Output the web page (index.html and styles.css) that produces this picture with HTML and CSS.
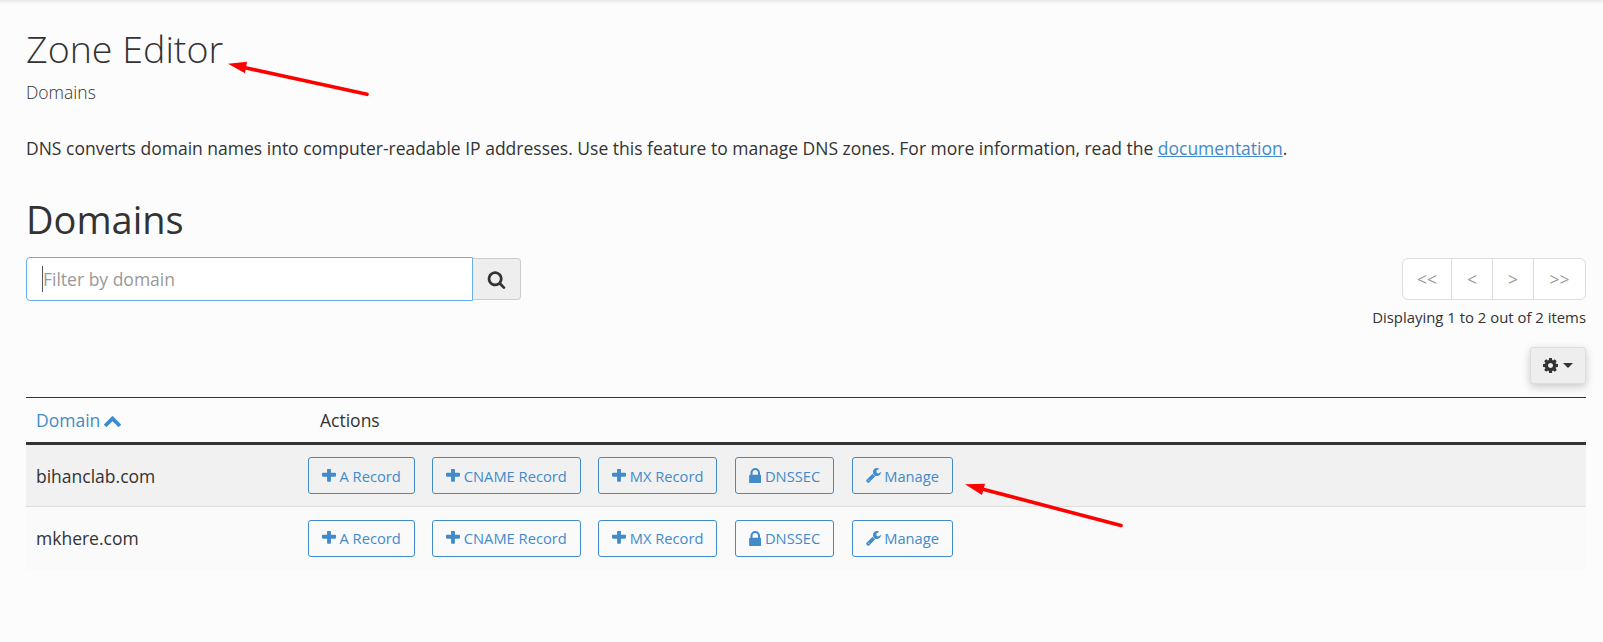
FILE: index.html
```html
<!DOCTYPE html>
<html lang="en">
<head>
<meta charset="utf-8">
<title>Zone Editor</title>
<link rel="stylesheet" href="styles.css">
</head>
<body>
<svg class="defs" width="0" height="0" aria-hidden="true">
  <symbol id="i-plus" viewBox="192 256 1408 1408"><path d="M1600 736v192q0 40-28 68t-68 28h-416v416q0 40-28 68t-68 28h-192q-40 0-68-28t-28-68v-416h-416q-40 0-68-28t-28-68v-192q0-40 28-68t68-28h416v-416q0-40 28-68t68-28h192q40 0 68 28t28 68v416h416q40 0 68 28t28 68z" transform="translate(0 0)"/></symbol>
  <symbol id="i-lock" viewBox="320 128 1152 1408"><path d="M640 768h512v-192q0-106-75-181t-181-75-181 75-75 181v192zm832 96v576q0 40-28 68t-68 28h-960q-40 0-68-28t-28-68v-576q0-40 28-68t68-28h32v-192q0-184 132-316t316-132 316 132 132 316v192h32q40 0 68 28t28 68z"/></symbol>
  <symbol id="i-wrench" viewBox="64 128 1664 1664"><path d="M448 1472q0-26-19-45t-45-19-45 19-19 45 19 45 45 19 45-19 19-45zm644-420l-682 682q-37 37-90 37-52 0-91-37l-106-108q-38-36-38-90 0-53 38-91l681-681q39 98 114.5 173.5t173.5 114.5zm634-435q0 39-23 106-47 134-164.5 217.5t-258.5 83.5q-185 0-316.5-131.5t-131.5-316.5 131.5-316.5 316.5-131.5q58 0 121.5 16.5t107.5 46.5q16 11 16 28t-16 28l-293 169v224l193 107q5-3 79-48.5t135.5-81 70.5-35.5q15 0 23.5 10t8.5 25z"/></symbol>
  <symbol id="i-cog" viewBox="128 128 1536 1536"><path d="M1152 896q0-106-75-181t-181-75-181 75-75 181 75 181 181 75 181-75 75-181zm512-109v222q0 12-8 23t-20 13l-185 28q-19 54-39 91 35 50 107 138 10 12 10 25t-9 23q-27 37-99 108t-94 71q-12 0-26-9l-138-108q-44 23-91 38-16 136-29 186-7 28-36 28h-222q-14 0-24.5-8.5t-11.5-21.5l-28-184q-49-16-90-37l-141 107q-10 9-25 9-14 0-25-11-126-114-165-168-7-10-7-23 0-12 8-23 15-21 51-66.5t54-70.5q-27-50-41-99l-183-27q-13-2-21-12.5t-8-23.5v-222q0-12 8-23t19-13l186-28q14-46 39-92-40-57-107-138-10-12-10-24 0-10 9-23 26-36 98.5-107.5t94.5-71.5q13 0 26 10l138 107q44-23 91-38 16-136 29-186 7-28 36-28h222q14 0 24.5 8.5t11.5 21.5l28 184q49 16 90 37l142-107q9-9 24-9 13 0 25 10 129 119 165 170 7 8 7 22 0 12-8 23-15 21-51 66.5t-54 70.5q26 50 41 98l183 28q13 2 21 12.5t8 23.5z"/></symbol>
  <symbol id="i-search" viewBox="0 0 1792 1792"><path d="M1216 832q0-185-131.5-316.5t-316.5-131.5-316.5 131.5-131.5 316.5 131.5 316.5 316.5 131.5 316.5-131.5 131.5-316.5zm512 832q0 52-38 90t-90 38q-54 0-90-38l-343-342q-179 124-399 124-143 0-273.5-55.5t-225-150-150-225-55.5-273.5 55.5-273.5 150-225 225-150 273.5-55.5 273.5 55.5 225 150 150 225 55.5 273.5q0 220-124 399l343 343q37 37 37 90z"/></symbol>
  <symbol id="i-chevron" viewBox="0 0 1792 1792"><path d="M1683 1331l-166 165q-19 19-45 19t-45-19l-531-531-531 531q-19 19-45 19t-45-19l-166-165q-19-19-19-45.5t19-45.5l742-741q19-19 45-19t45 19l742 741q19 19 19 45.5t-19 45.5z"/></symbol>
</svg>

<main class="page">
  <h1 class="title">Zone Editor</h1>
  <p class="subtitle">Domains</p>
  <p class="intro">DNS converts domain names into computer-readable IP addresses. Use this feature to manage DNS zones. For more information, read the <a href="#">documentation</a>.</p>
  <h2 class="section">Domains</h2>

  <div class="toolbar">
    <div class="search">
      <div class="search-input"><span class="caret-bar"></span><span class="placeholder">Filter by domain</span></div>
      <div class="search-btn"><svg class="ico-search"><use href="#i-search"/></svg></div>
    </div>
    <div class="paging">
      <div class="pager">
        <span class="pg pg-wide">&lt;&lt;</span><span class="pg">&lt;</span><span class="pg">&gt;</span><span class="pg pg-last">&gt;&gt;</span>
      </div>
      <div class="count">Displaying 1 to 2 out of 2 items</div>
    </div>
  </div>

  <div class="settings-row">
    <div class="settings"><svg class="ico-cog"><use href="#i-cog"/></svg><span class="drop"></span></div>
  </div>

  <table class="grid">
    <thead>
      <tr>
        <th class="col-domain"><a href="#">Domain <svg class="ico-chevron"><use href="#i-chevron"/></svg></a></th>
        <th class="col-actions">Actions</th>
      </tr>
    </thead>
    <tbody>
      <tr class="row-alt">
        <td class="name">bihanclab.com</td>
        <td>
          <div class="actions">
            <a class="btn" href="#"><svg class="ico"><use href="#i-plus"/></svg>A Record</a>
            <a class="btn" href="#"><svg class="ico"><use href="#i-plus"/></svg>CNAME Record</a>
            <a class="btn" href="#"><svg class="ico"><use href="#i-plus"/></svg>MX Record</a>
            <a class="btn" href="#"><svg class="ico-lock"><use href="#i-lock"/></svg>DNSSEC</a>
            <a class="btn" href="#"><svg class="ico-wrench"><use href="#i-wrench"/></svg>Manage</a>
          </div>
        </td>
      </tr>
      <tr class="row-plain">
        <td class="name">mkhere.com</td>
        <td>
          <div class="actions">
            <a class="btn" href="#"><svg class="ico"><use href="#i-plus"/></svg>A Record</a>
            <a class="btn" href="#"><svg class="ico"><use href="#i-plus"/></svg>CNAME Record</a>
            <a class="btn" href="#"><svg class="ico"><use href="#i-plus"/></svg>MX Record</a>
            <a class="btn" href="#"><svg class="ico-lock"><use href="#i-lock"/></svg>DNSSEC</a>
            <a class="btn" href="#"><svg class="ico-wrench"><use href="#i-wrench"/></svg>Manage</a>
          </div>
        </td>
      </tr>
    </tbody>
  </table>
</main>

<svg class="arrows" width="1603" height="642" aria-hidden="true">
  <path class="head" d="M228 63.7 L247 61.8 L245 73.3 Z"/>
  <path class="shaft" d="M244 67.5 L367 94.3"/>
  <path class="head" d="M965 484.3 L985 483.8 L982 495 Z"/>
  <path class="shaft" d="M980 488.5 L1121 525.5"/>
</svg>
</body>
</html>
```

FILE: styles.css
```css
* { box-sizing: border-box; }
html, body { margin: 0; padding: 0; }
body {
  width: 1603px;
  height: 642px;
  overflow: hidden;
  position: relative;
  background: #fcfcfc;
  color: #333;
  font-family: "Open Sans", "Liberation Sans", sans-serif;
  font-size: 17.5px;
  box-shadow: inset 0 4px 4px -3px rgba(0, 0, 0, .12);
}
a { color: #428bca; }
.defs { position: absolute; }

.page { padding: 0 17px 0 26px; }

.title {
  margin: 0;
  padding-top: 24px;
  font-size: 37.6px;
  line-height: 50px;
  font-weight: 300;
}
.subtitle {
  margin: 6px 0 0;
  font-size: 17.5px;
  line-height: 24px;
  font-weight: 300;
}
.intro {
  margin: 32px 0 0;
  font-size: 17.5px;
  line-height: 24px;
}
.section {
  margin: 34px 0 0;
  font-size: 38px;
  line-height: 50px;
  font-weight: 500;
}

.toolbar {
  display: flex;
  justify-content: space-between;
  align-items: flex-start;
  margin-top: 13px;
}
.search { display: flex; width: 495px; height: 44px; }
.search-input {
  flex: 1;
  display: flex;
  align-items: center;
  padding-left: 15px;
  background: #fff;
  border: 1px solid #66afe9;
  border-radius: 4px 0 0 4px;
}
.caret-bar { width: 1px; height: 26px; background: #555; }
.placeholder { font-size: 17.5px; color: #999; }
.search-btn {
  width: 48px;
  display: flex;
  align-items: center;
  justify-content: center;
  background: #eee;
  border: 1px solid #ccc;
  border-left: 0;
  border-radius: 0 4px 4px 0;
  margin: 1px 0;
}
.ico-search { width: 19px; height: 19px; fill: #333; }

.paging { display: flex; flex-direction: column; align-items: flex-end; }
.pager {
  display: flex;
  height: 42px;
  margin-top: 1px;
  background: #fff;
  border: 1px solid #ddd;
  border-radius: 6px;
  color: #999;
  font-size: 17.5px;
}
.pg {
  width: 41px;
  display: flex;
  align-items: center;
  justify-content: center;
  border-right: 1px solid #ddd;
}
.pg-wide { width: 49px; }
.pg-last { width: 51px; border-right: 0; }
.count { margin-top: 7px; font-size: 14.9px; line-height: 20px; }

.settings-row { display: flex; justify-content: flex-end; margin-top: 20px; }
.settings {
  width: 56px;
  height: 37px;
  display: flex;
  align-items: center;
  justify-content: center;
  gap: 5px;
  background: #eee;
  border: 1px solid #ddd;
  border-radius: 3px;
  box-shadow: 0 3px 8px rgba(0, 0, 0, .2);
}
.ico-cog { width: 15px; height: 15px; fill: #333; }
.drop {
  width: 0;
  height: 0;
  border-left: 5.5px solid transparent;
  border-right: 5.5px solid transparent;
  border-top: 5.5px solid #333;
}

.grid {
  width: 100%;
  margin-top: 13px;
  border-collapse: collapse;
  table-layout: fixed;
}
.grid th {
  height: 46px;
  padding: 0;
  font-size: 17.5px;
  font-weight: 400;
  text-align: left;
  border-top: 1px solid #333;
  border-bottom: 3px solid #333;
}
.grid th a { text-decoration: none; }
.col-domain { width: 282px; padding-left: 10px !important; }
.col-actions { padding-left: 12px !important; }
.ico-chevron { width: 19px; height: 19px; fill: #428bca; vertical-align: -3px; margin-left: -2px; }

.grid td { height: 63px; padding: 0; }
.grid tbody tr { border-bottom: 1px solid #ddd; }
.grid tbody tr:last-child { border-bottom: 0; }
.row-alt { background: #f1f1f1; }
.row-plain { background: #fafafa; }
.grid .name { padding-left: 10px; font-size: 17.5px; }

.actions { display: flex; gap: 17.5px; }
.btn {
  display: flex;
  align-items: center;
  height: 37px;
  padding: 0 13px;
  font-size: 14.7px;
  color: #428bca;
  text-decoration: none;
  border: 1px solid #428bca;
  border-radius: 3px;
}
.ico { width: 14px; height: 14px; margin-right: 3.5px; fill: #428bca; }
.ico-lock { width: 12.5px; height: 15px; margin-right: 3.5px; fill: #428bca; }
.ico-wrench { width: 15px; height: 15px; margin-right: 3.5px; fill: #428bca; }

.arrows { position: absolute; left: 0; top: 0; pointer-events: none; }
.arrows .head { fill: #f00; }
.arrows .shaft { fill: none; stroke: #f00; stroke-width: 3.6; stroke-linecap: round; }
```
